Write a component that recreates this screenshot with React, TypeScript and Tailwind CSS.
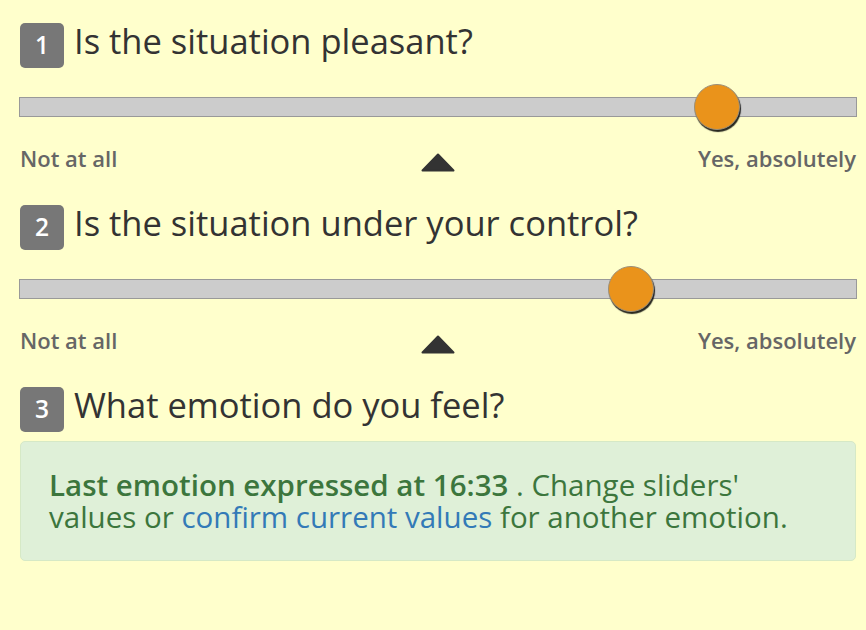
import React from "react";

type Q = { n: number; title: string; value?: number };

const questions: Q[] = [
  { n: 1, title: "Is the situation pleasant?", value: 0.8343 },
  { n: 2, title: "Is the situation under your control?", value: 0.7309 },
];

function Header({ n, title }: { n: number; title: string }) {
  return (
    <div className="flex items-start gap-[10px]">
      <div className="flex h-[45px] w-[44px] shrink-0 items-center justify-center rounded-[5px] bg-[#777777] text-[24.5px] font-semibold text-white">
        {n}
      </div>
      <h2 className="text-[34.5px] font-normal leading-[36px] text-[#333333]">{title}</h2>
    </div>
  );
}

function Triangle() {
  return (
    <svg width="34" height="19" viewBox="0 0 34 19" className="mt-[10px]">
      <polygon
        points="1.5,17.5 17,1.5 32.5,17.5"
        fill="#333333"
        stroke="#333333"
        strokeWidth="2"
        strokeLinejoin="round"
      />
    </svg>
  );
}

function SliderQuestion({ q }: { q: Q }) {
  return (
    <div className="mb-[32px]">
      <Header n={q.n} title={q.title} />
      <div className="relative mx-[-1px] mt-[29px] h-[20px] border border-[#999999] bg-[#cccccc]">
        <div
          className="absolute top-1/2 h-[46px] w-[46px] -translate-x-1/2 -translate-y-1/2 rounded-full border border-[#9a8f7a] bg-[#ea931b] shadow-[1px_2px_1px_rgba(0,0,0,0.85)]"
          style={{ left: `${(q.value ?? 0.5) * 100}%` }}
        />
      </div>
      <div className="mt-[26px] grid grid-cols-[1fr_auto_1fr] text-[22px] font-semibold leading-[30px] text-[#666666]">
        <span>Not at all</span>
        <Triangle />
        <span className="text-right">Yes, absolutely</span>
      </div>
    </div>
  );
}

export default function App() {
  return (
    <div
      className="min-h-[630px] bg-[#ffffcc] pl-[20px] pr-[10px] pt-[23px]"
      style={{ fontFamily: '"Open Sans", "Noto Sans", sans-serif' }}
    >
      {questions.map((q) => (
        <SliderQuestion key={q.n} q={q} />
      ))}
      <div>
        <Header n={3} title="What emotion do you feel?" />
        <div className="mt-[9px] rounded-[5px] border border-[#d6e9c6] bg-[#dff0d8] px-[28px] py-[27px] text-[29.5px] leading-[32px] text-[#3c763d]">
          <span className="font-semibold">Last emotion expressed at 16:33</span> . Change sliders'
          <br />
          values or{" "}
          <a href="#" className="text-[#337ab7]">
            confirm current values
          </a>{" "}
          for another emotion.
        </div>
      </div>
    </div>
  );
}
